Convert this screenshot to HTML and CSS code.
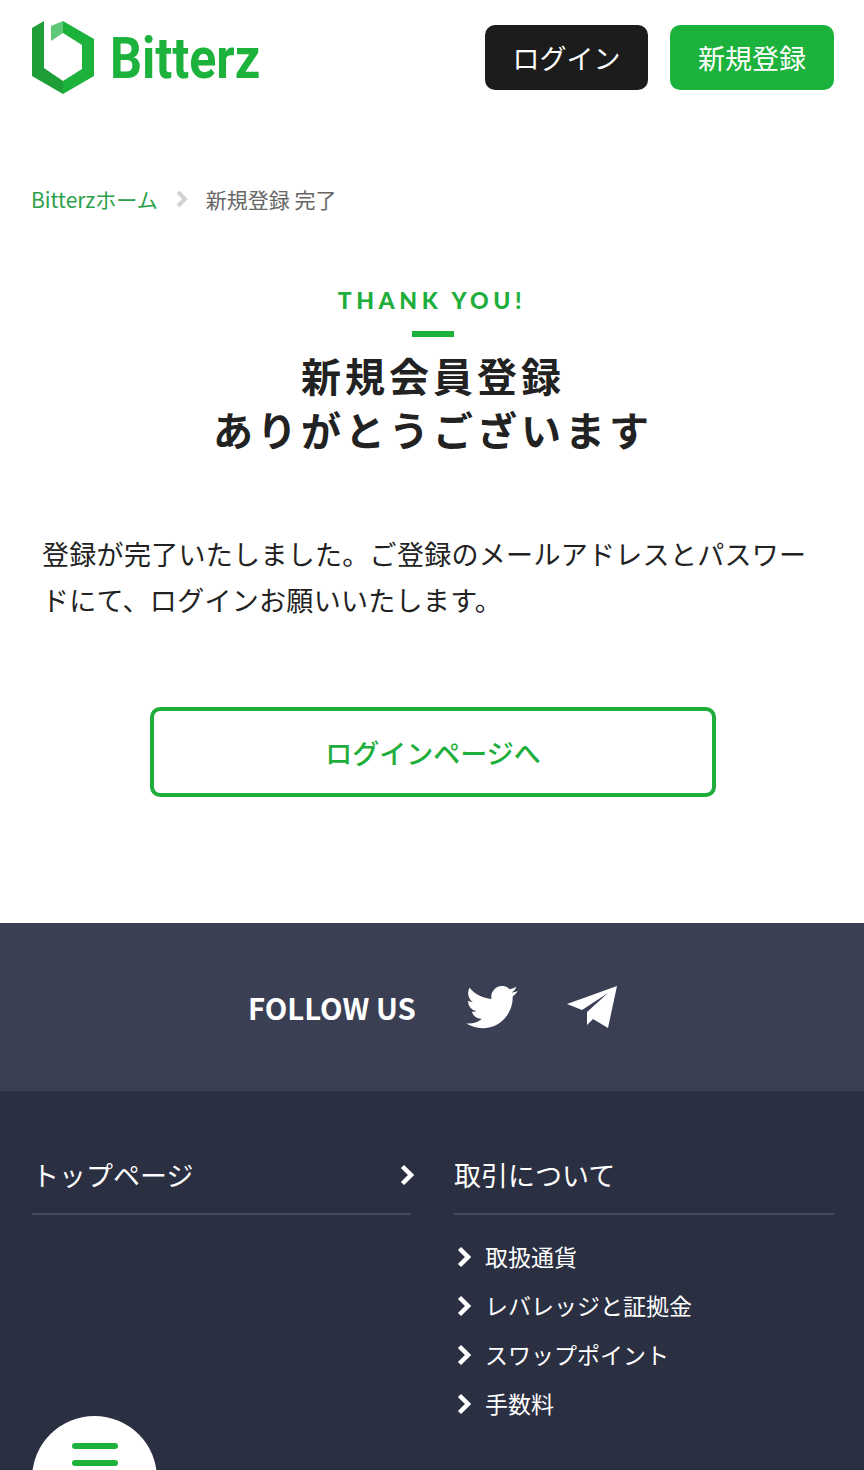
FILE: index.html
```html
<!DOCTYPE html>
<html lang="ja">
<head>
    <meta charset="UTF-8">
    <title>新規登録 完了 | Bitterz</title>
    <link rel="stylesheet" href="styles.css">
</head>
<body>
<div class="page">
    <header class="header">
        <a class="logo" href="#">
            <svg class="logo-mark" viewBox="0 0 64 74" width="64" height="74">
                <polygon fill="#1f9e38" points="0,7 12,0 12,47 31,60 31,73 0,55"/>
                <polygon fill="#1cb23c" points="31,0 62,18 62,55 31,73 31,60 50,48 50,24 31,12"/>
                <polygon fill="#5fc878" points="19,5 31,0 31,12 19,20"/>
            </svg>
            <span class="logo-text">Bitterz</span>
        </a>
        <nav class="header-btns">
            <a class="btn btn-dark" href="#">ログイン</a>
            <a class="btn btn-green" href="#">新規登録</a>
        </nav>
    </header>

    <div class="breadcrumb">
        <a href="#">Bitterzホーム</a>
        <svg class="chev-crumb" viewBox="0 0 12 18" width="12" height="18"><path d="M2 2l7 7-7 7" fill="none" stroke="#d2d2d2" stroke-width="4"/></svg>
        <span>新規登録 完了</span>
    </div>

    <main class="thanks">
        <p class="thanks-en">THANK YOU!</p>
        <div class="thanks-line"></div>
        <h1>新規会員登録<br>ありがとうございます</h1>
        <p class="thanks-text">登録が完了いたしました。ご登録のメールアドレスとパスワードにて、ログインお願いいたします。</p>
        <a class="btn-outline" href="#">ログインページへ</a>
    </main>

    <section class="follow">
        <span class="follow-title">FOLLOW US</span>
        <svg class="follow-twitter" viewBox="0 0 24 24" width="52" height="52"><path fill="#fff" d="M23.95 4.57a10 10 0 0 1-2.82.77 4.96 4.96 0 0 0 2.16-2.72c-.95.55-2 .96-3.13 1.19a4.92 4.92 0 0 0-8.38 4.48C7.69 8.1 4.07 6.13 1.64 3.16a4.82 4.82 0 0 0-.66 2.47c0 1.71.87 3.21 2.19 4.1a4.9 4.9 0 0 1-2.23-.62v.06a4.92 4.92 0 0 0 3.95 4.83 5 5 0 0 1-2.21.08 4.94 4.94 0 0 0 4.6 3.42A9.87 9.87 0 0 1 0 19.54a14 14 0 0 0 7.56 2.21c9.05 0 14-7.5 14-13.98 0-.21 0-.42-.02-.63a9.94 9.94 0 0 0 2.41-2.57z"/></svg>
        <svg class="follow-telegram" viewBox="0 0 50 42" width="50" height="42"><path fill="#fff" d="M50 0L0 18l15 6 26-17-21 19v13l6-6 15 9z"/></svg>
    </section>

    <footer class="footer">
        <div class="footer-col">
            <a class="footer-head" href="#">
                <span>トップページ</span>
                <svg class="chev" viewBox="0 0 14 22" width="14" height="22"><path d="M2.5 2.5l8.5 8.5-8.5 8.5" fill="none" stroke="#fff" stroke-width="4.5"/></svg>
            </a>
        </div>
        <div class="footer-col">
            <div class="footer-head"><span>取引について</span></div>
            <ul class="footer-list">
                <li><svg class="chev" viewBox="0 0 14 22" width="14" height="22"><path d="M2.5 2.5l8.5 8.5-8.5 8.5" fill="none" stroke="#fff" stroke-width="4.5"/></svg>取扱通貨</li>
                <li><svg class="chev" viewBox="0 0 14 22" width="14" height="22"><path d="M2.5 2.5l8.5 8.5-8.5 8.5" fill="none" stroke="#fff" stroke-width="4.5"/></svg>レバレッジと証拠金</li>
                <li><svg class="chev" viewBox="0 0 14 22" width="14" height="22"><path d="M2.5 2.5l8.5 8.5-8.5 8.5" fill="none" stroke="#fff" stroke-width="4.5"/></svg>スワップポイント</li>
                <li><svg class="chev" viewBox="0 0 14 22" width="14" height="22"><path d="M2.5 2.5l8.5 8.5-8.5 8.5" fill="none" stroke="#fff" stroke-width="4.5"/></svg>手数料</li>
            </ul>
        </div>
    </footer>

    <button class="menu-btn" type="button" aria-label="menu"><i></i><i></i></button>
</div>
</body>
</html>
```

FILE: styles.css
```css
* {
    padding: 0;
    margin: 0;
    list-style: none;
    box-sizing: border-box;
}

html, body {
    height: 1470px;
    overflow: hidden;
}

body {
    font-family: "Noto Sans CJK JP", "Noto Sans", sans-serif;
    color: #222;
    background: #fff;
}

a {
    color: inherit;
    text-decoration: none;
}

.page {
    position: relative;
    height: 1470px;
    overflow: hidden;
}

/* header */
.header {
    display: flex;
    justify-content: space-between;
    align-items: flex-start;
    padding: 21px 30px 0 32px;
    height: 163px;
}

.logo {
    display: flex;
    align-items: center;
    height: 74px;
}

.logo-mark {
    flex: none;
}

.logo-text {
    display: inline-block;
    margin-left: 14px;
    font-family: Roboto, "Liberation Sans", sans-serif;
    font-weight: 700;
    font-size: 58px;
    line-height: 74px;
    color: #1cb23c;
    transform: scaleX(.865);
    transform-origin: left center;
}

.header-btns {
    display: flex;
    gap: 22px;
    padding-top: 4px;
}

.btn {
    display: flex;
    align-items: center;
    justify-content: center;
    width: 164px;
    height: 65px;
    border-radius: 10px;
    font-size: 27px;
    color: #fff;
}

.btn-dark {
    width: 163px;
    background: #1c1c1c;
}

.btn-green {
    background: #1cb23c;
}

/* breadcrumb */
.breadcrumb {
    display: flex;
    align-items: center;
    padding-left: 31px;
    height: 72px;
    font-size: 21px;
    color: #666;
}

.breadcrumb a {
    color: #2ba14a;
}

.chev-crumb {
    margin: 0 18px;
}

/* thanks */
.thanks {
    text-align: center;
    height: 688px;
    padding-top: 51px;
}

.thanks-en {
    font-family: Lato, sans-serif;
    font-weight: 900;
    font-size: 23px;
    line-height: 28px;
    letter-spacing: 4.6px;
    color: #1fae3c;
}

.thanks-line {
    width: 42px;
    height: 6px;
    margin: 17px 0 0 412px;
    background: #1cb23c;
}

.thanks h1 {
    margin-top: 11px;
    padding-left: 2px;
    font-size: 40px;
    font-weight: 700;
    line-height: 54px;
    letter-spacing: 4px;
}

.thanks-text {
    margin-top: 75px;
    padding: 0 42px;
    text-align: left;
    font-size: 27px;
    line-height: 46px;
    letter-spacing: .3px;
}

.btn-outline {
    display: flex;
    align-items: center;
    justify-content: center;
    width: 566px;
    height: 90px;
    margin: 84px 0 0 150px;
    border: 4px solid #1fae3c;
    border-radius: 10px;
    font-size: 27px;
    font-weight: 500;
    color: #1fae3c;
}

/* follow */
.follow {
    display: flex;
    align-items: center;
    height: 168px;
    padding-left: 248px;
    background: #3b3f53;
}

.follow-title {
    font-size: 29.3px;
    font-weight: 700;
    color: #fff;
}

.follow-twitter {
    margin-left: 50px;
}

.follow-telegram {
    margin-left: 49px;
}

/* footer */
.footer {
    display: grid;
    grid-template-columns: 379px 380px;
    column-gap: 43px;
    padding: 56px 30px 0 32px;
    height: 379px;
    background: #2b2f42;
}

.footer-head {
    display: flex;
    justify-content: space-between;
    align-items: center;
    height: 68px;
    padding-bottom: 11px;
    border-bottom: 2px solid #474b5e;
    font-size: 27px;
    color: #fff;
}

.footer-head .chev {
    margin-right: -3px;
}

.footer-list {
    padding-top: 17px;
}

.footer-list li {
    display: flex;
    align-items: center;
    height: 49px;
    font-size: 23px;
    line-height: 45px;
    color: #fff;
}

.footer-list .chev {
    margin: 0 14px 0 3px;
}

/* floating menu */
.menu-btn {
    position: absolute;
    left: 32px;
    top: 1416px;
    width: 125px;
    height: 125px;
    border: 0;
    border-radius: 50%;
    background: #fff;
}

.menu-btn i {
    position: absolute;
    left: 40px;
    width: 46px;
    height: 6px;
    border-radius: 3px;
    background: #1cb23c;
}

.menu-btn i:nth-child(1) {
    top: 27px;
}

.menu-btn i:nth-child(2) {
    top: 44px;
}
```
